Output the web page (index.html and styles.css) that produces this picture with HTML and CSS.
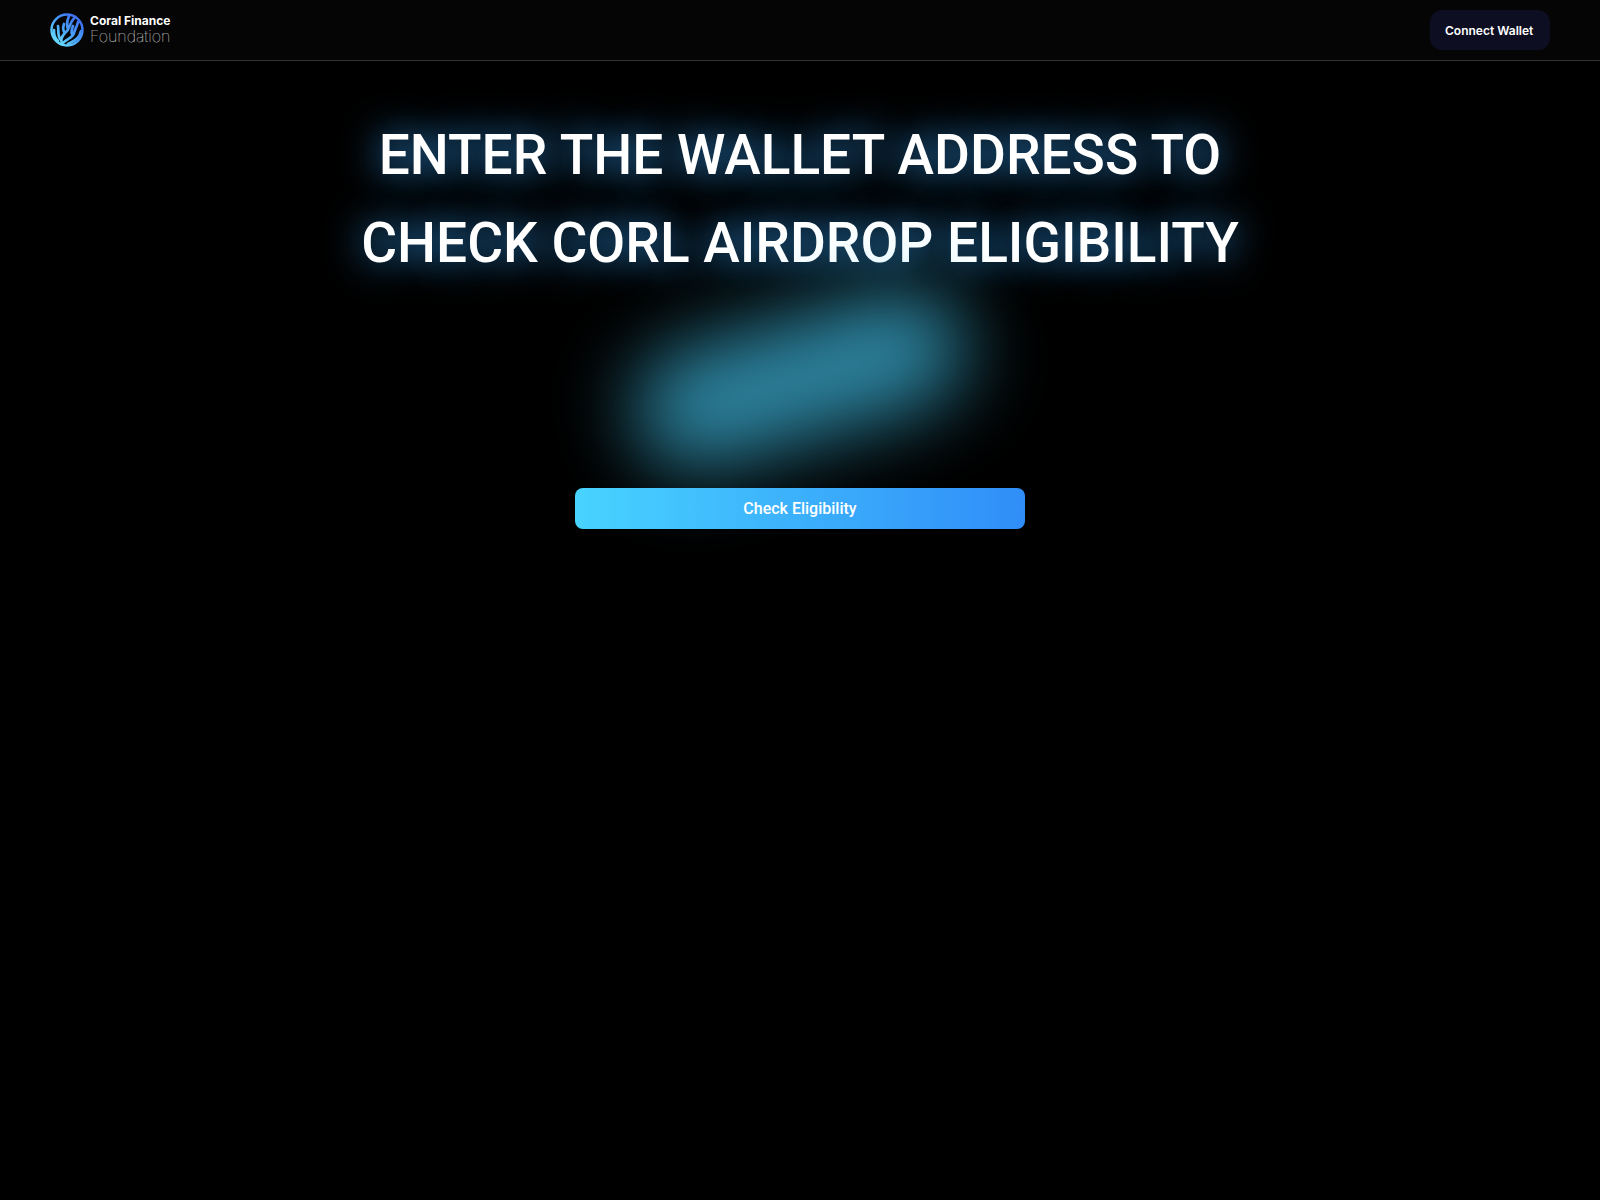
FILE: index.html
```html
<!DOCTYPE html>
<html lang="en">
<head>
    <meta charset="utf-8">
    <meta name="viewport" content="width=device-width, initial-scale=1">
    <title>Coral Finance Foundation</title>
    <link rel="stylesheet" href="styles.css">
</head>
<body>
    <header class="header">
        <a class="logo" href="#">
            <svg class="logo-mark" viewBox="0 0 34 34" fill="none" aria-hidden="true">
                <defs>
                    <linearGradient id="coral" x1="4" y1="30" x2="26" y2="5" gradientUnits="userSpaceOnUse">
                        <stop offset="0" stop-color="#6be3ff"/>
                        <stop offset="0.5" stop-color="#4aa5f8"/>
                        <stop offset="1" stop-color="#3f73f5"/>
                    </linearGradient>
                </defs>
                <g stroke="url(#coral)" stroke-linecap="round" stroke-linejoin="round">
                    <circle cx="17" cy="17" r="15.5" stroke-width="2.4"/>
                    <path stroke-width="2.7" d="M12 31C10 26 12 23 15 20C20 16 19 13 21 10C22 7 24 6 25 4M15 20C12 17 13 14 14 11M18 16C16 12 17 8 19 3M11 27C7 23 9 18 8 13M8 28C4 24 4 21 4 17M13 30C16 26 23 25 24 20C25 16 27 14 28 9M23 22C20 20 22 16 23 13M18 31C23 28 29 27 31 18"/>
                </g>
            </svg>
            <span class="logo-text">
                <span class="logo-name">Coral Finance</span>
                <span class="logo-sub">Foundation</span>
            </span>
        </a>
        <button type="button" class="connect">Connect Wallet</button>
    </header>

    <main class="main">
        <h1 class="title">ENTER THE WALLET ADDRESS TO<br>CHECK CORL AIRDROP ELIGIBILITY</h1>
        <div class="glow"></div>
        <button type="button" class="check">Check Eligibility</button>
    </main>
</body>
</html>
```
FILE: styles.css
```css
* {
    box-sizing: border-box;
}
body {
    margin: 0;
    min-height: 100vh;
    background-color: #000;
    color: #fff;
    font-family: Inter, "Liberation Sans", sans-serif;
}
button {
    border: none;
    color: #fff;
    font-family: inherit;
    cursor: pointer;
}

/* Top bar */
.header {
    display: flex;
    align-items: center;
    justify-content: space-between;
    padding: 10px 50px;
    background-color: #050505;
    border-bottom: 1px solid #333;
}
.logo {
    display: flex;
    align-items: center;
    gap: 6px;
    color: #fff;
    text-decoration: none;
}
.logo-mark {
    width: 34px;
    height: 34px;
}
.logo-text {
    display: flex;
    flex-direction: column;
    padding-bottom: 3px;
}
.logo-name {
    font-size: 12px;
    line-height: 15px;
    font-weight: 700;
}
.logo-sub {
    font-size: 16px;
    line-height: 16px;
    font-weight: 100;
    color: #fff;
}
.connect {
    width: 120px;
    height: 40px;
    padding: 0 15px;
    border-radius: 12px;
    background-color: #0d0e21;
    font-size: 12px;
    font-weight: 600;
    text-align: left;
    white-space: nowrap;
}

/* Airdrop check */
.main {
    display: flex;
    flex-direction: column;
    align-items: center;
    padding: 50px 20px;
}
.title {
    margin: 0;
    font-family: Roboto, sans-serif;
    font-size: 55px;
    line-height: 88px;
    font-weight: 500;
    text-align: center;
    text-shadow: 0 0 36px #38a5ff;
}
.glow {
    width: 340px;
    height: 120px;
    margin: 32px 0 49px;
    border-radius: 60px;
    background-color: #48d3ff;
    opacity: 0.64;
    filter: blur(40px);
    transform: rotate(-16deg);
}
.check {
    position: relative;
    width: 100%;
    max-width: 450px;
    height: 41px;
    border-radius: 8px;
    background: linear-gradient(90deg, #48d3ff, #308df8);
    font-family: Roboto, sans-serif;
    font-size: 16px;
    font-weight: 500;
}
```
